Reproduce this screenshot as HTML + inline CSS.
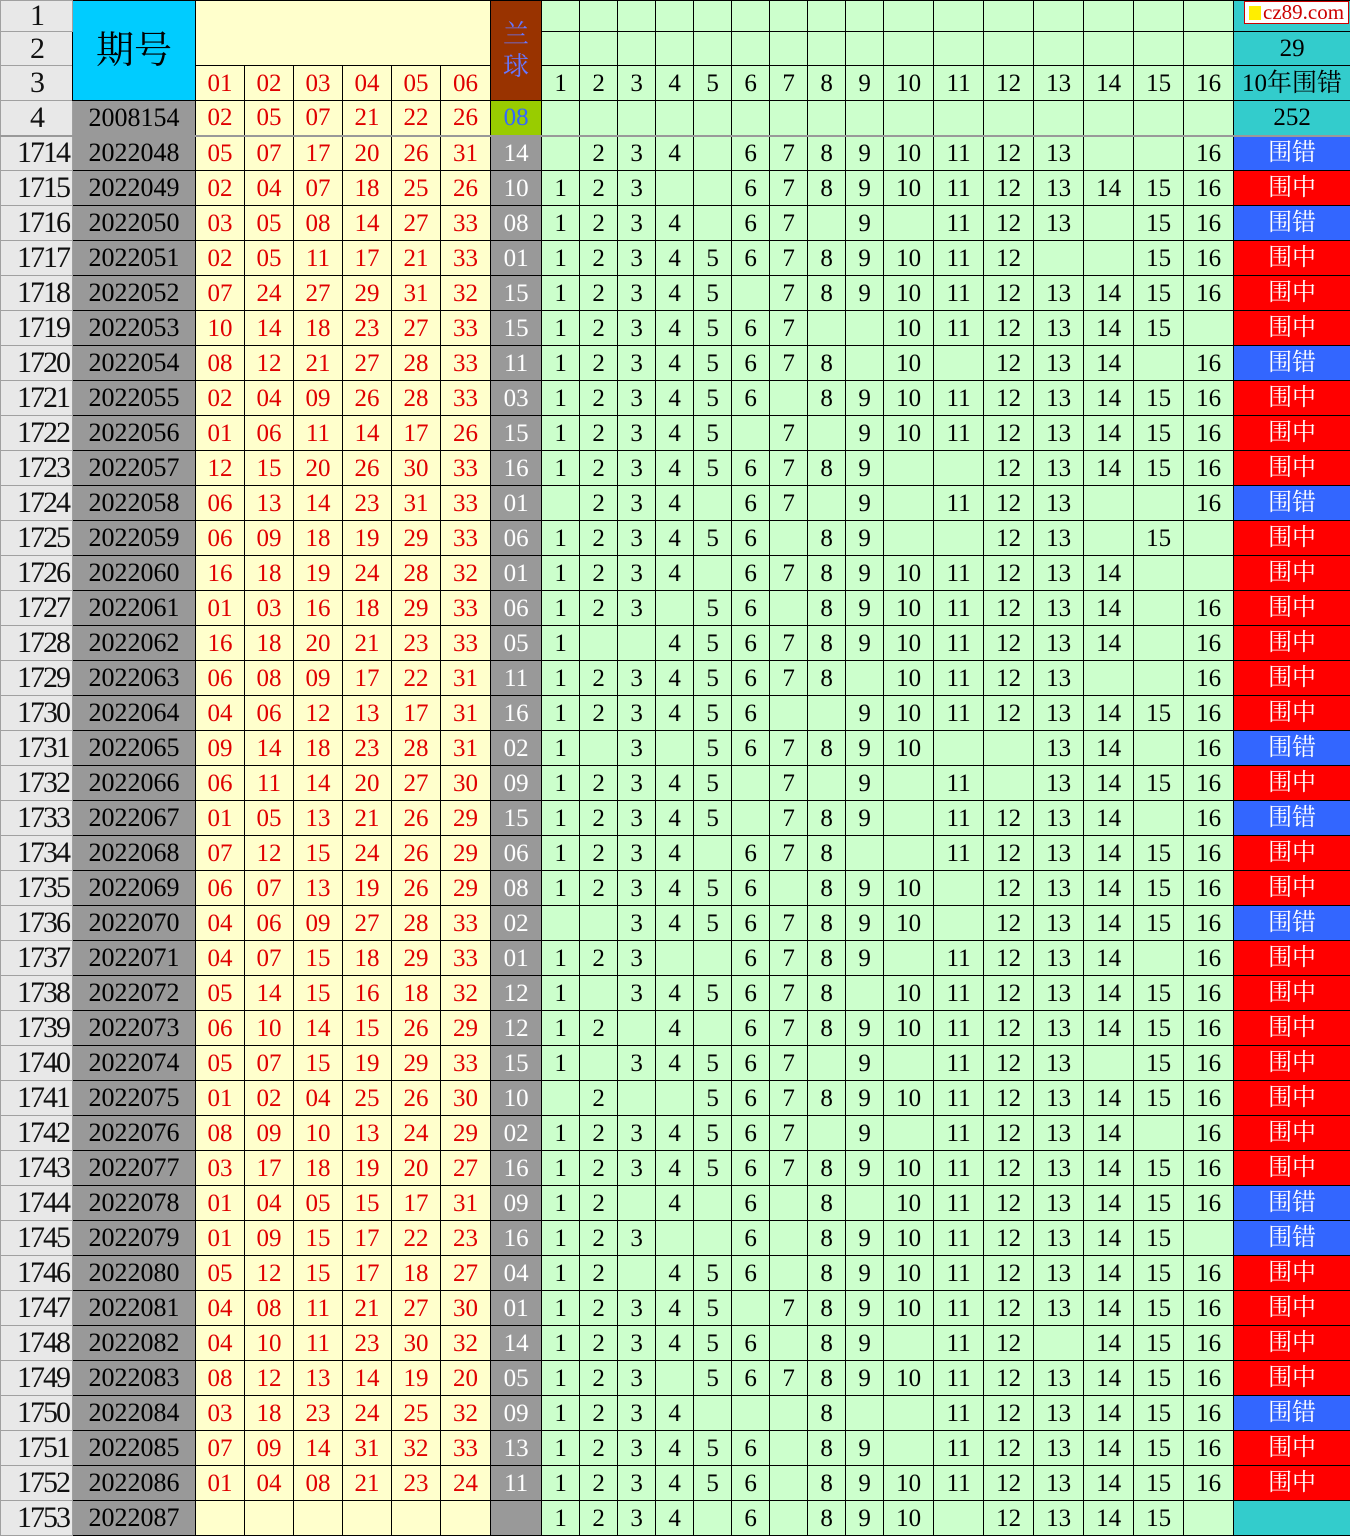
<!DOCTYPE html>
<html><head><meta charset="utf-8"><style>
*{margin:0;padding:0;box-sizing:border-box}
body{width:1350px;height:1533px;overflow:hidden;background:#fff}
table{border-collapse:collapse;table-layout:fixed;width:1350px;font-family:"Liberation Serif","Noto Serif CJK SC",serif;font-size:25px}
td{border:1px solid #000;text-align:center;vertical-align:middle;padding:0;overflow:hidden;white-space:nowrap;line-height:1}
tr{height:35px}
.rn{background:#e8e8e8;border-color:#a0a0a0;font-size:30px;color:#111;text-align:center;letter-spacing:-2px}
.qh{background:#00ccff;font-size:38px;font-family:"Liberation Serif","Noto Serif CJK SC",serif}
.y{background:#ffffcc;color:#e00000}
.g{background:#ccffcc;color:#000}
.gr{background:#999;color:#000;font-size:26px}
.bh{background:#993300;color:#6677ff;font-size:26px;line-height:1.2;white-space:normal}
.bl{background:#99cc00;color:#3366ff}
.c{background:#33cccc;color:#000}
tbody td:nth-child(1){background:#e8e8e8;border-color:#a0a0a0;font-size:30px;color:#111;text-align:right;padding-right:3px;letter-spacing:-2px}
tbody td:nth-child(2){background:#999;color:#000;font-size:26px}
tbody td:nth-child(n+3):nth-child(-n+8){background:#ffffcc;color:#e00000}
tbody td:nth-child(9){background:#999;color:#fff}
tbody td:nth-child(n+10):nth-child(-n+25){background:#ccffcc}
tbody td.e{background:#3366ff!important;color:#fff;font-size:24px}
tbody td.z{background:#ff0000!important;color:#fff;font-size:24px}
tbody td.k{background:#33cccc!important}
tbody tr:first-child td{border-top:2px solid #999}
.logo{position:absolute;left:1244px;top:1px;width:105px;height:23px;background:#fff;border:1px solid #c00;color:#c00;font-size:21px;font-family:"Liberation Serif",serif;line-height:21px;padding-left:18px}
.logo i{position:absolute;left:4px;top:4px;width:12px;height:14px;background:#ffee00}
</style></head><body>
<div class="logo"><i></i>cz89.com</div>
<table>
<colgroup><col style="width:72px"><col style="width:123px"><col style="width:49px"><col style="width:49px"><col style="width:49px"><col style="width:49px"><col style="width:49px"><col style="width:50px"><col style="width:51px"><col style="width:38px"><col style="width:38px"><col style="width:38px"><col style="width:38px"><col style="width:38px"><col style="width:38px"><col style="width:38px"><col style="width:38px"><col style="width:38px"><col style="width:50px"><col style="width:50px"><col style="width:50px"><col style="width:50px"><col style="width:50px"><col style="width:50px"><col style="width:50px"><col style="width:117px"></colgroup>
<thead>
<tr style="height:29px"><td class="rn">1</td><td class="qh" rowspan="3">期号</td><td class="y" colspan="6" rowspan="2"></td><td class="bh" rowspan="3">兰<br>球</td><td class="g"></td><td class="g"></td><td class="g"></td><td class="g"></td><td class="g"></td><td class="g"></td><td class="g"></td><td class="g"></td><td class="g"></td><td class="g"></td><td class="g"></td><td class="g"></td><td class="g"></td><td class="g"></td><td class="g"></td><td class="g"></td><td class="c"></td></tr>
<tr style="height:34px"><td class="rn">2</td><td class="g"></td><td class="g"></td><td class="g"></td><td class="g"></td><td class="g"></td><td class="g"></td><td class="g"></td><td class="g"></td><td class="g"></td><td class="g"></td><td class="g"></td><td class="g"></td><td class="g"></td><td class="g"></td><td class="g"></td><td class="g"></td><td class="c">29</td></tr>
<tr><td class="rn">3</td><td class="y">01</td><td class="y">02</td><td class="y">03</td><td class="y">04</td><td class="y">05</td><td class="y">06</td><td class="g">1</td><td class="g">2</td><td class="g">3</td><td class="g">4</td><td class="g">5</td><td class="g">6</td><td class="g">7</td><td class="g">8</td><td class="g">9</td><td class="g">10</td><td class="g">11</td><td class="g">12</td><td class="g">13</td><td class="g">14</td><td class="g">15</td><td class="g">16</td><td class="c" style="font-size:25px">10年围错</td></tr>
<tr><td class="rn">4</td><td class="gr">2008154</td><td class="y">02</td><td class="y">05</td><td class="y">07</td><td class="y">21</td><td class="y">22</td><td class="y">26</td><td class="bl">08</td><td class="g"></td><td class="g"></td><td class="g"></td><td class="g"></td><td class="g"></td><td class="g"></td><td class="g"></td><td class="g"></td><td class="g"></td><td class="g"></td><td class="g"></td><td class="g"></td><td class="g"></td><td class="g"></td><td class="g"></td><td class="g"></td><td class="c">252</td></tr>
</thead>
<tbody>
<tr><td>1714</td><td>2022048</td><td>05</td><td>07</td><td>17</td><td>20</td><td>26</td><td>31</td><td>14</td><td></td><td>2</td><td>3</td><td>4</td><td></td><td>6</td><td>7</td><td>8</td><td>9</td><td>10</td><td>11</td><td>12</td><td>13</td><td></td><td></td><td>16</td><td class="e">围错</td></tr>
<tr><td>1715</td><td>2022049</td><td>02</td><td>04</td><td>07</td><td>18</td><td>25</td><td>26</td><td>10</td><td>1</td><td>2</td><td>3</td><td></td><td></td><td>6</td><td>7</td><td>8</td><td>9</td><td>10</td><td>11</td><td>12</td><td>13</td><td>14</td><td>15</td><td>16</td><td class="z">围中</td></tr>
<tr><td>1716</td><td>2022050</td><td>03</td><td>05</td><td>08</td><td>14</td><td>27</td><td>33</td><td>08</td><td>1</td><td>2</td><td>3</td><td>4</td><td></td><td>6</td><td>7</td><td></td><td>9</td><td></td><td>11</td><td>12</td><td>13</td><td></td><td>15</td><td>16</td><td class="e">围错</td></tr>
<tr><td>1717</td><td>2022051</td><td>02</td><td>05</td><td>11</td><td>17</td><td>21</td><td>33</td><td>01</td><td>1</td><td>2</td><td>3</td><td>4</td><td>5</td><td>6</td><td>7</td><td>8</td><td>9</td><td>10</td><td>11</td><td>12</td><td></td><td></td><td>15</td><td>16</td><td class="z">围中</td></tr>
<tr><td>1718</td><td>2022052</td><td>07</td><td>24</td><td>27</td><td>29</td><td>31</td><td>32</td><td>15</td><td>1</td><td>2</td><td>3</td><td>4</td><td>5</td><td></td><td>7</td><td>8</td><td>9</td><td>10</td><td>11</td><td>12</td><td>13</td><td>14</td><td>15</td><td>16</td><td class="z">围中</td></tr>
<tr><td>1719</td><td>2022053</td><td>10</td><td>14</td><td>18</td><td>23</td><td>27</td><td>33</td><td>15</td><td>1</td><td>2</td><td>3</td><td>4</td><td>5</td><td>6</td><td>7</td><td></td><td></td><td>10</td><td>11</td><td>12</td><td>13</td><td>14</td><td>15</td><td></td><td class="z">围中</td></tr>
<tr><td>1720</td><td>2022054</td><td>08</td><td>12</td><td>21</td><td>27</td><td>28</td><td>33</td><td>11</td><td>1</td><td>2</td><td>3</td><td>4</td><td>5</td><td>6</td><td>7</td><td>8</td><td></td><td>10</td><td></td><td>12</td><td>13</td><td>14</td><td></td><td>16</td><td class="e">围错</td></tr>
<tr><td>1721</td><td>2022055</td><td>02</td><td>04</td><td>09</td><td>26</td><td>28</td><td>33</td><td>03</td><td>1</td><td>2</td><td>3</td><td>4</td><td>5</td><td>6</td><td></td><td>8</td><td>9</td><td>10</td><td>11</td><td>12</td><td>13</td><td>14</td><td>15</td><td>16</td><td class="z">围中</td></tr>
<tr><td>1722</td><td>2022056</td><td>01</td><td>06</td><td>11</td><td>14</td><td>17</td><td>26</td><td>15</td><td>1</td><td>2</td><td>3</td><td>4</td><td>5</td><td></td><td>7</td><td></td><td>9</td><td>10</td><td>11</td><td>12</td><td>13</td><td>14</td><td>15</td><td>16</td><td class="z">围中</td></tr>
<tr><td>1723</td><td>2022057</td><td>12</td><td>15</td><td>20</td><td>26</td><td>30</td><td>33</td><td>16</td><td>1</td><td>2</td><td>3</td><td>4</td><td>5</td><td>6</td><td>7</td><td>8</td><td>9</td><td></td><td></td><td>12</td><td>13</td><td>14</td><td>15</td><td>16</td><td class="z">围中</td></tr>
<tr><td>1724</td><td>2022058</td><td>06</td><td>13</td><td>14</td><td>23</td><td>31</td><td>33</td><td>01</td><td></td><td>2</td><td>3</td><td>4</td><td></td><td>6</td><td>7</td><td></td><td>9</td><td></td><td>11</td><td>12</td><td>13</td><td></td><td></td><td>16</td><td class="e">围错</td></tr>
<tr><td>1725</td><td>2022059</td><td>06</td><td>09</td><td>18</td><td>19</td><td>29</td><td>33</td><td>06</td><td>1</td><td>2</td><td>3</td><td>4</td><td>5</td><td>6</td><td></td><td>8</td><td>9</td><td></td><td></td><td>12</td><td>13</td><td></td><td>15</td><td></td><td class="z">围中</td></tr>
<tr><td>1726</td><td>2022060</td><td>16</td><td>18</td><td>19</td><td>24</td><td>28</td><td>32</td><td>01</td><td>1</td><td>2</td><td>3</td><td>4</td><td></td><td>6</td><td>7</td><td>8</td><td>9</td><td>10</td><td>11</td><td>12</td><td>13</td><td>14</td><td></td><td></td><td class="z">围中</td></tr>
<tr><td>1727</td><td>2022061</td><td>01</td><td>03</td><td>16</td><td>18</td><td>29</td><td>33</td><td>06</td><td>1</td><td>2</td><td>3</td><td></td><td>5</td><td>6</td><td></td><td>8</td><td>9</td><td>10</td><td>11</td><td>12</td><td>13</td><td>14</td><td></td><td>16</td><td class="z">围中</td></tr>
<tr><td>1728</td><td>2022062</td><td>16</td><td>18</td><td>20</td><td>21</td><td>23</td><td>33</td><td>05</td><td>1</td><td></td><td></td><td>4</td><td>5</td><td>6</td><td>7</td><td>8</td><td>9</td><td>10</td><td>11</td><td>12</td><td>13</td><td>14</td><td></td><td>16</td><td class="z">围中</td></tr>
<tr><td>1729</td><td>2022063</td><td>06</td><td>08</td><td>09</td><td>17</td><td>22</td><td>31</td><td>11</td><td>1</td><td>2</td><td>3</td><td>4</td><td>5</td><td>6</td><td>7</td><td>8</td><td></td><td>10</td><td>11</td><td>12</td><td>13</td><td></td><td></td><td>16</td><td class="z">围中</td></tr>
<tr><td>1730</td><td>2022064</td><td>04</td><td>06</td><td>12</td><td>13</td><td>17</td><td>31</td><td>16</td><td>1</td><td>2</td><td>3</td><td>4</td><td>5</td><td>6</td><td></td><td></td><td>9</td><td>10</td><td>11</td><td>12</td><td>13</td><td>14</td><td>15</td><td>16</td><td class="z">围中</td></tr>
<tr><td>1731</td><td>2022065</td><td>09</td><td>14</td><td>18</td><td>23</td><td>28</td><td>31</td><td>02</td><td>1</td><td></td><td>3</td><td></td><td>5</td><td>6</td><td>7</td><td>8</td><td>9</td><td>10</td><td></td><td></td><td>13</td><td>14</td><td></td><td>16</td><td class="e">围错</td></tr>
<tr><td>1732</td><td>2022066</td><td>06</td><td>11</td><td>14</td><td>20</td><td>27</td><td>30</td><td>09</td><td>1</td><td>2</td><td>3</td><td>4</td><td>5</td><td></td><td>7</td><td></td><td>9</td><td></td><td>11</td><td></td><td>13</td><td>14</td><td>15</td><td>16</td><td class="z">围中</td></tr>
<tr><td>1733</td><td>2022067</td><td>01</td><td>05</td><td>13</td><td>21</td><td>26</td><td>29</td><td>15</td><td>1</td><td>2</td><td>3</td><td>4</td><td>5</td><td></td><td>7</td><td>8</td><td>9</td><td></td><td>11</td><td>12</td><td>13</td><td>14</td><td></td><td>16</td><td class="e">围错</td></tr>
<tr><td>1734</td><td>2022068</td><td>07</td><td>12</td><td>15</td><td>24</td><td>26</td><td>29</td><td>06</td><td>1</td><td>2</td><td>3</td><td>4</td><td></td><td>6</td><td>7</td><td>8</td><td></td><td></td><td>11</td><td>12</td><td>13</td><td>14</td><td>15</td><td>16</td><td class="z">围中</td></tr>
<tr><td>1735</td><td>2022069</td><td>06</td><td>07</td><td>13</td><td>19</td><td>26</td><td>29</td><td>08</td><td>1</td><td>2</td><td>3</td><td>4</td><td>5</td><td>6</td><td></td><td>8</td><td>9</td><td>10</td><td></td><td>12</td><td>13</td><td>14</td><td>15</td><td>16</td><td class="z">围中</td></tr>
<tr><td>1736</td><td>2022070</td><td>04</td><td>06</td><td>09</td><td>27</td><td>28</td><td>33</td><td>02</td><td></td><td></td><td>3</td><td>4</td><td>5</td><td>6</td><td>7</td><td>8</td><td>9</td><td>10</td><td></td><td>12</td><td>13</td><td>14</td><td>15</td><td>16</td><td class="e">围错</td></tr>
<tr><td>1737</td><td>2022071</td><td>04</td><td>07</td><td>15</td><td>18</td><td>29</td><td>33</td><td>01</td><td>1</td><td>2</td><td>3</td><td></td><td></td><td>6</td><td>7</td><td>8</td><td>9</td><td></td><td>11</td><td>12</td><td>13</td><td>14</td><td></td><td>16</td><td class="z">围中</td></tr>
<tr><td>1738</td><td>2022072</td><td>05</td><td>14</td><td>15</td><td>16</td><td>18</td><td>32</td><td>12</td><td>1</td><td></td><td>3</td><td>4</td><td>5</td><td>6</td><td>7</td><td>8</td><td></td><td>10</td><td>11</td><td>12</td><td>13</td><td>14</td><td>15</td><td>16</td><td class="z">围中</td></tr>
<tr><td>1739</td><td>2022073</td><td>06</td><td>10</td><td>14</td><td>15</td><td>26</td><td>29</td><td>12</td><td>1</td><td>2</td><td></td><td>4</td><td></td><td>6</td><td>7</td><td>8</td><td>9</td><td>10</td><td>11</td><td>12</td><td>13</td><td>14</td><td>15</td><td>16</td><td class="z">围中</td></tr>
<tr><td>1740</td><td>2022074</td><td>05</td><td>07</td><td>15</td><td>19</td><td>29</td><td>33</td><td>15</td><td>1</td><td></td><td>3</td><td>4</td><td>5</td><td>6</td><td>7</td><td></td><td>9</td><td></td><td>11</td><td>12</td><td>13</td><td></td><td>15</td><td>16</td><td class="z">围中</td></tr>
<tr><td>1741</td><td>2022075</td><td>01</td><td>02</td><td>04</td><td>25</td><td>26</td><td>30</td><td>10</td><td></td><td>2</td><td></td><td></td><td>5</td><td>6</td><td>7</td><td>8</td><td>9</td><td>10</td><td>11</td><td>12</td><td>13</td><td>14</td><td>15</td><td>16</td><td class="z">围中</td></tr>
<tr><td>1742</td><td>2022076</td><td>08</td><td>09</td><td>10</td><td>13</td><td>24</td><td>29</td><td>02</td><td>1</td><td>2</td><td>3</td><td>4</td><td>5</td><td>6</td><td>7</td><td></td><td>9</td><td></td><td>11</td><td>12</td><td>13</td><td>14</td><td></td><td>16</td><td class="z">围中</td></tr>
<tr><td>1743</td><td>2022077</td><td>03</td><td>17</td><td>18</td><td>19</td><td>20</td><td>27</td><td>16</td><td>1</td><td>2</td><td>3</td><td>4</td><td>5</td><td>6</td><td>7</td><td>8</td><td>9</td><td>10</td><td>11</td><td>12</td><td>13</td><td>14</td><td>15</td><td>16</td><td class="z">围中</td></tr>
<tr><td>1744</td><td>2022078</td><td>01</td><td>04</td><td>05</td><td>15</td><td>17</td><td>31</td><td>09</td><td>1</td><td>2</td><td></td><td>4</td><td></td><td>6</td><td></td><td>8</td><td></td><td>10</td><td>11</td><td>12</td><td>13</td><td>14</td><td>15</td><td>16</td><td class="e">围错</td></tr>
<tr><td>1745</td><td>2022079</td><td>01</td><td>09</td><td>15</td><td>17</td><td>22</td><td>23</td><td>16</td><td>1</td><td>2</td><td>3</td><td></td><td></td><td>6</td><td></td><td>8</td><td>9</td><td>10</td><td>11</td><td>12</td><td>13</td><td>14</td><td>15</td><td></td><td class="e">围错</td></tr>
<tr><td>1746</td><td>2022080</td><td>05</td><td>12</td><td>15</td><td>17</td><td>18</td><td>27</td><td>04</td><td>1</td><td>2</td><td></td><td>4</td><td>5</td><td>6</td><td></td><td>8</td><td>9</td><td>10</td><td>11</td><td>12</td><td>13</td><td>14</td><td>15</td><td>16</td><td class="z">围中</td></tr>
<tr><td>1747</td><td>2022081</td><td>04</td><td>08</td><td>11</td><td>21</td><td>27</td><td>30</td><td>01</td><td>1</td><td>2</td><td>3</td><td>4</td><td>5</td><td></td><td>7</td><td>8</td><td>9</td><td>10</td><td>11</td><td>12</td><td>13</td><td>14</td><td>15</td><td>16</td><td class="z">围中</td></tr>
<tr><td>1748</td><td>2022082</td><td>04</td><td>10</td><td>11</td><td>23</td><td>30</td><td>32</td><td>14</td><td>1</td><td>2</td><td>3</td><td>4</td><td>5</td><td>6</td><td></td><td>8</td><td>9</td><td></td><td>11</td><td>12</td><td></td><td>14</td><td>15</td><td>16</td><td class="z">围中</td></tr>
<tr><td>1749</td><td>2022083</td><td>08</td><td>12</td><td>13</td><td>14</td><td>19</td><td>20</td><td>05</td><td>1</td><td>2</td><td>3</td><td></td><td>5</td><td>6</td><td>7</td><td>8</td><td>9</td><td>10</td><td>11</td><td>12</td><td>13</td><td>14</td><td>15</td><td>16</td><td class="z">围中</td></tr>
<tr><td>1750</td><td>2022084</td><td>03</td><td>18</td><td>23</td><td>24</td><td>25</td><td>32</td><td>09</td><td>1</td><td>2</td><td>3</td><td>4</td><td></td><td></td><td></td><td>8</td><td></td><td></td><td>11</td><td>12</td><td>13</td><td>14</td><td>15</td><td>16</td><td class="e">围错</td></tr>
<tr><td>1751</td><td>2022085</td><td>07</td><td>09</td><td>14</td><td>31</td><td>32</td><td>33</td><td>13</td><td>1</td><td>2</td><td>3</td><td>4</td><td>5</td><td>6</td><td></td><td>8</td><td>9</td><td></td><td>11</td><td>12</td><td>13</td><td>14</td><td>15</td><td>16</td><td class="z">围中</td></tr>
<tr><td>1752</td><td>2022086</td><td>01</td><td>04</td><td>08</td><td>21</td><td>23</td><td>24</td><td>11</td><td>1</td><td>2</td><td>3</td><td>4</td><td>5</td><td>6</td><td></td><td>8</td><td>9</td><td>10</td><td>11</td><td>12</td><td>13</td><td>14</td><td>15</td><td>16</td><td class="z">围中</td></tr>
<tr><td>1753</td><td>2022087</td><td></td><td></td><td></td><td></td><td></td><td></td><td></td><td>1</td><td>2</td><td>3</td><td>4</td><td></td><td>6</td><td></td><td>8</td><td>9</td><td>10</td><td></td><td>12</td><td>13</td><td>14</td><td>15</td><td></td><td class="k"></td></tr>
</tbody></table>
</body></html>
